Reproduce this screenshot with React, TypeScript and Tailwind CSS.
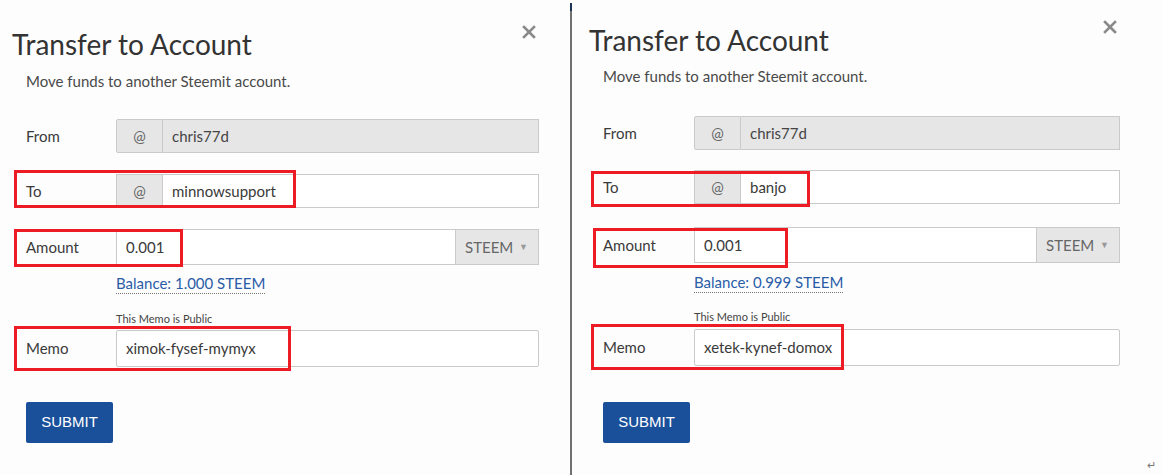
import React from 'react';

type Box = { cls: string };

type PanelCfg = {
  to: string;
  balance: string;
  memo: string;
  wrap: string;
  head: string;
  close: string;
  sub: string;
  form: string;
  labelW: string;
  fromMt: string;
  toMt: string;
  amountMt: string;
  balanceMt: string;
  publicMt: string;
  memoMt: string;
  submitMt: string;
  boxes: Box[];
  corner?: boolean;
};

const panels: PanelCfg[] = [
  {
    to: 'minnowsupport',
    balance: 'Balance: 1.000 STEEM',
    memo: 'ximok-fysef-mymyx',
    wrap: 'w-[570px]',
    head: 'pl-[12px] pr-[34px] pt-[26px]',
    close: 'mt-[-1px]',
    sub: 'mt-[9px] pl-[26px]',
    form: 'pl-[26px] pr-[31px]',
    labelW: 'w-[90px]',
    fromMt: 'mt-[28px]',
    toMt: 'mt-[21px]',
    amountMt: 'mt-[21px]',
    balanceMt: 'mt-[8px]',
    publicMt: 'mt-[18px]',
    memoMt: 'mt-[4px]',
    submitMt: 'mt-[35px]',
    boxes: [
      { cls: 'left-[14px] top-[170px] w-[282px] h-[38px]' },
      { cls: 'left-[14px] top-[229px] w-[169px] h-[38px]' },
      { cls: 'left-[14px] top-[326px] w-[277px] h-[45px]' },
    ],
  },
  {
    to: 'banjo',
    balance: 'Balance: 0.999 STEEM',
    memo: 'xetek-kynef-domox',
    wrap: 'flex-1',
    head: 'pl-[17px] pr-[45px] pt-[22px]',
    close: 'mt-[-2px]',
    sub: 'mt-[8px] pl-[31px]',
    form: 'pl-[31px] pr-[42px]',
    labelW: 'w-[91px]',
    fromMt: 'mt-[30px]',
    toMt: 'mt-[20px]',
    amountMt: 'mt-[23px]',
    balanceMt: 'mt-[9px]',
    publicMt: 'mt-[17px]',
    memoMt: 'mt-[5px]',
    submitMt: 'mt-[36px]',
    boxes: [
      { cls: 'left-[19px] top-[171px] w-[219px] h-[36px]' },
      { cls: 'left-[21px] top-[228px] w-[195px] h-[40px]' },
      { cls: 'left-[19px] top-[324px] w-[253px] h-[46px]' },
    ],
    corner: true,
  },
];

const CloseIcon = () => (
  <svg width="14" height="14" viewBox="0 0 14 14" fill="none">
    <path d="M2 2 L12 12 M12 2 L2 12" stroke="#8a8a8a" strokeWidth="2.6" strokeLinecap="square" />
  </svg>
);

const Addon: React.FC<{ children: React.ReactNode; className?: string }> = ({ children, className = '' }) => (
  <div className={`flex items-center bg-[#e6e6e6] border border-[#cacaca] text-[#666] ${className}`}>{children}</div>
);

const Panel: React.FC<{ p: PanelCfg }> = ({ p }) => (
  <div className={`relative h-full bg-[#fdfdfd] ${p.wrap}`}>
    <div className={`flex justify-between items-start ${p.head}`}>
      <h1 className="text-[28px] leading-[36px] text-[#333]">Transfer to Account</h1>
      <div className={p.close}>
        <CloseIcon />
      </div>
    </div>
    <p className={`text-[15px] leading-[20px] text-[#4a4a4a] ${p.sub}`}>Move funds to another Steemit account.</p>

    <div className={`text-[15px] text-[#3a3a3a] ${p.form}`}>
      {/* From */}
      <div className={`flex items-center h-[34px] ${p.fromMt}`}>
        <span className={`shrink-0 ${p.labelW}`}>From</span>
        <div className="flex flex-1 h-full">
          <Addon className="w-[47px] justify-center rounded-l-[2px] text-[15px]">@</Addon>
          <div className="flex-1 flex items-center pl-[9px] bg-[#e6e6e6] border border-l-0 border-[#cacaca] text-[15px] text-[#444]">chris77d</div>
        </div>
      </div>

      {/* To */}
      <div className={`flex items-center h-[34px] ${p.toMt}`}>
        <span className={`shrink-0 ${p.labelW}`}>To</span>
        <div className="flex flex-1 h-full">
          <Addon className="w-[47px] justify-center text-[15px]">@</Addon>
          <div className="flex-1 flex items-center pl-[9px] bg-white border border-l-0 border-[#cacaca] text-[15px] text-[#3a3a3a]">{p.to}</div>
        </div>
      </div>

      {/* Amount */}
      <div className={`flex items-center h-[36px] ${p.amountMt}`}>
        <span className={`shrink-0 ${p.labelW}`}>Amount</span>
        <div className="flex flex-1 h-full">
          <div className="flex-1 flex items-center pl-[9px] bg-white border border-[#cacaca] text-[15px] text-[#3a3a3a]">0.001</div>
          <Addon className="w-[83px] border-l-0 pl-[9px] justify-between pr-[10px] text-[15px]">
            <span>STEEM</span>
            <span className="text-[9px] text-[#999]">▼</span>
          </Addon>
        </div>
      </div>

      {/* Balance */}
      <div className={`flex ${p.balanceMt}`}>
        <span className={`shrink-0 ${p.labelW}`} />
        <span className="text-[15px] leading-[20px] text-[#2a5ca8] border-b border-dotted border-[#777]">{p.balance}</span>
      </div>

      {/* Memo note */}
      <div className={`flex ${p.publicMt}`}>
        <span className={`shrink-0 ${p.labelW}`} />
        <span className="text-[11px] leading-[14px] text-[#444]">This Memo is Public</span>
      </div>

      {/* Memo */}
      <div className={`flex items-center h-[37px] ${p.memoMt}`}>
        <span className={`shrink-0 ${p.labelW}`}>Memo</span>
        <div className="flex-1 h-full flex items-center pl-[9px] bg-white border border-[#cacaca] rounded-[2px] text-[15px] text-[#3a3a3a]">{p.memo}</div>
      </div>

      <button className={`block w-[87px] h-[41px] bg-[#1a4f9a] rounded-[2px] text-white text-[15px] font-['Liberation_Sans',Arial,sans-serif] ${p.submitMt}`}>
        SUBMIT
      </button>
    </div>

    {p.boxes.map((b, i) => (
      <div key={i} className={`absolute border-[3px] border-[#ed1c24] pointer-events-none ${b.cls}`} />
    ))}

    {p.corner && <span className="absolute right-[6px] bottom-[2px] text-[11px] text-[#777]">↵</span>}
  </div>
);

const App: React.FC = () => {
  return (
    <div className="flex w-[1162px] h-[475px] overflow-hidden bg-[#fdfdfd] font-['Lato','Noto_Sans',sans-serif]">
      <Panel p={panels[0]} />
      <div className="flex flex-col w-[2px] shrink-0 pt-[3px]">
        <div className="h-[8px] bg-[#1c3553]" />
        <div className="flex-1 bg-[#707070]" />
      </div>
      <Panel p={panels[1]} />
    </div>
  );
};

export default App;
